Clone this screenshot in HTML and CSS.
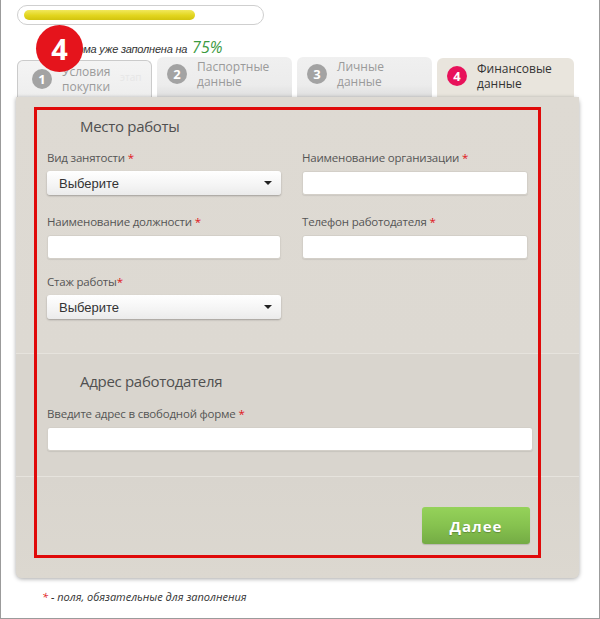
FILE: index.html
```html
<!DOCTYPE html>
<html lang="ru">
<head>
<meta charset="utf-8">
<title>Финансовые данные</title>
<link rel="stylesheet" href="styles.css">
</head>
<body>
<div class="frame">
  <div class="progress"><div class="progress-fill" style="width:171px"></div></div>
  <p class="status">Форма уже заполнена на <span class="pct">75%</span></p>
  <div class="badge">4</div>

  <div class="tabs">
    <div class="tab tab-done"><span class="num">1</span><span class="tab-text">Условия<br>покупки</span><span class="ghost">этап</span></div>
    <div class="tab"><span class="num">2</span><span class="tab-text">Паспортные<br>данные</span></div>
    <div class="tab"><span class="num">3</span><span class="tab-text">Личные<br>данные</span></div>
    <div class="tab tab-active"><span class="num">4</span><span class="tab-text">Финансовые<br>данные</span></div>
  </div>

  <div class="panel">
    <section class="sec sec-work">
      <h2 class="sec-title">Место работы</h2>
      <div class="grid">
        <div class="field">
          <label class="label">Вид занятости <span class="req">*</span></label>
          <div class="select w-left"><span>Выберите</span><span class="caret"></span></div>
        </div>
        <div class="field">
          <label class="label">Наименование организации <span class="req">*</span></label>
          <input class="input w-right" type="text">
        </div>
        <div class="field">
          <label class="label">Наименование должности <span class="req">*</span></label>
          <input class="input w-left" type="text">
        </div>
        <div class="field">
          <label class="label">Телефон работодателя <span class="req">*</span></label>
          <input class="input w-right" type="text">
        </div>
        <div class="field field-tight">
          <label class="label">Стаж работы<span class="req">*</span></label>
          <div class="select w-left"><span>Выберите</span><span class="caret"></span></div>
        </div>
      </div>
    </section>

    <section class="sec sec-addr">
      <h2 class="sec-title">Адрес работодателя</h2>
      <div class="field">
        <label class="label">Введите адрес в свободной форме <span class="req">*</span></label>
        <input class="input w-full" type="text">
      </div>
    </section>

    <div class="sec sec-actions">
      <button class="btn" type="button">Далее</button>
    </div>

    <div class="highlight"></div>
  </div>

  <p class="note"><span class="req">*</span> - поля, обязательные для заполнения</p>
</div>
</body>
</html>
```

FILE: styles.css
```css
* { box-sizing: border-box; }
html, body { margin: 0; padding: 0; background: #fff; }
body { font-family: "Open Sans", "Liberation Sans", sans-serif; color: #333; }

.frame {
  position: relative;
  width: 600px;
  height: 619px;
  border-left: 1px solid #9b9b9b;
  border-right: 1px solid #9b9b9b;
  border-bottom: 1px solid #9b9b9b;
  padding-top: 5px;
  padding-left: 15px;
}

.progress {
  width: 247px;
  height: 20px;
  margin-left: 1px;
  border: 1px solid #cfcfcf;
  border-radius: 10px;
  background: #fff;
  padding: 4px 6px;
}
.progress-fill {
  height: 10px;
  border-radius: 5px;
  background: linear-gradient(#f1e85a, #e2d51e 55%, #d2c40e);
}

.status {
  margin: 12px 0 0 47px;
  height: 20px;
  line-height: 20px;
  font-family: "Liberation Sans", Arial, sans-serif;
  font-size: 11px;
  letter-spacing: -0.2px;
  font-style: italic;
  color: #333;
}
.pct {
  font-family: "Open Sans", "Liberation Sans", sans-serif;
  font-size: 16px;
  letter-spacing: 0;
  color: #3b9a3f;
  margin-left: 2px;
}

.badge {
  position: absolute;
  left: 35px;
  top: 25px;
  width: 47px;
  height: 47px;
  border-radius: 50%;
  background: #e5141c;
  color: #fff;
  font-family: "Open Sans", "Liberation Sans", sans-serif;
  font-weight: 700;
  font-size: 29px;
  line-height: 47px;
  text-align: center;
  z-index: 5;
}

.tabs {
  display: flex;
  gap: 5px;
  height: 40px;
  margin-left: 1px;
  align-items: flex-end;
}
.tab {
  position: relative;
  width: 135px;
  height: 40px;
  display: flex;
  align-items: center;
  gap: 10px;
  padding: 0 8px 6px 10px;
  border-radius: 6px 6px 0 0;
  background: linear-gradient(#f0f0f0, #ececec 70%, #dedede);
  font-size: 12px;
  line-height: 15px;
  color: #9a9a9a;
}
.tab-done {
  height: 37px;
  padding: 4px 8px 4px 14px;
  border: 1px solid #cbcbcb;
  border-bottom: none;
  background: linear-gradient(#f4f4f4, #eeeeee);
}
.tab-active {
  width: 137px;
  height: 39px;
  background: #e9e5dd;
  color: #333;
  padding-bottom: 4px;
}
.num {
  flex: none;
  width: 20px;
  height: 20px;
  border-radius: 50%;
  background: #a3a3a3;
  color: #fff;
  font-weight: 700;
  font-size: 13px;
  line-height: 20px;
  text-align: center;
}
.tab-active .num { background: #e8125a; }
.ghost {
  position: absolute;
  left: 102px;
  top: 9px;
  color: #e6e6e6;
  font-size: 10px;
}

.panel {
  position: relative;
  width: 563px;
  height: 481px;
  background: #dcd8d0;
  border-radius: 0 6px 6px 6px;
  box-shadow: 0 1px 4px rgba(0, 0, 0, 0.35);
}

.sec { border-bottom: 1px solid #e6e3dd; }
.sec-work {
  height: 257px;
  padding: 19px 0 0 31px;
  background: linear-gradient(#dedad3, #ddd9d2);
}
.sec-addr {
  height: 123px;
  padding: 17px 0 0 31px;
  background: #d9d5ce;
}
.sec-actions {
  height: 101px;
  border-bottom: none;
  padding: 30px 49px 0 0;
  display: flex;
  justify-content: flex-end;
  align-items: flex-start;
  background: linear-gradient(#d9d5ce, #dcd8d0);
  border-radius: 0 0 6px 6px;
}

.sec-title {
  margin: 0 0 14px 33px;
  font-size: 15px;
  line-height: 20px;
  font-weight: 400;
  letter-spacing: -0.3px;
  color: #505050;
}
.sec-addr .sec-title { margin-bottom: 15px; }

.grid {
  display: grid;
  grid-template-columns: 235px 226px;
  column-gap: 20px;
  row-gap: 19px;
}
.field { display: flex; flex-direction: column; }
.field-tight { margin-top: -4px; }
.label {
  font-size: 11.5px;
  line-height: 16px;
  color: #555;
  margin-bottom: 5px;
  letter-spacing: -0.2px;
}
.req { color: #e0141b; }

.select {
  height: 24px;
  display: flex;
  align-items: center;
  justify-content: space-between;
  padding: 0 9px 0 12px;
  border-radius: 3px;
  background: linear-gradient(#ffffff, #f4f4f4 60%, #ebebeb);
  box-shadow: 0 1px 2px rgba(0, 0, 0, 0.28);
  font-family: "Liberation Sans", Arial, sans-serif;
  font-size: 13px;
  color: #333;
}
.caret {
  width: 0;
  height: 0;
  border-left: 4px solid transparent;
  border-right: 4px solid transparent;
  border-top: 4px solid #222;
}
.input {
  display: block;
  height: 24px;
  margin: 0;
  border: 1px solid #d3cfc8;
  border-radius: 3px;
  background: #fff;
  box-shadow: 0 1px 1px rgba(0, 0, 0, 0.08);
  outline: none;
}
.w-left { width: 234px; }
.w-right { width: 226px; }
.w-full { width: 486px; }

.btn {
  width: 108px;
  height: 37px;
  border: none;
  border-radius: 3px;
  background: linear-gradient(#95d25a, #86c24f 50%, #74ab44);
  box-shadow: 0 1px 1px rgba(0, 0, 0, 0.15);
  color: #fff;
  font-family: "Open Sans", "Liberation Sans", sans-serif;
  font-weight: 700;
  font-size: 15px;
  letter-spacing: 1px;
  text-shadow: 0 1px 1px rgba(0, 0, 0, 0.25);
  cursor: pointer;
}

.highlight {
  position: absolute;
  left: 18px;
  top: 10px;
  width: 507px;
  height: 451px;
  border: 3px solid #e00a0a;
  pointer-events: none;
}

.note {
  margin: 11px 0 0 26px;
  font-size: 11px;
  font-style: italic;
  line-height: 16px;
  color: #333;
}
```
